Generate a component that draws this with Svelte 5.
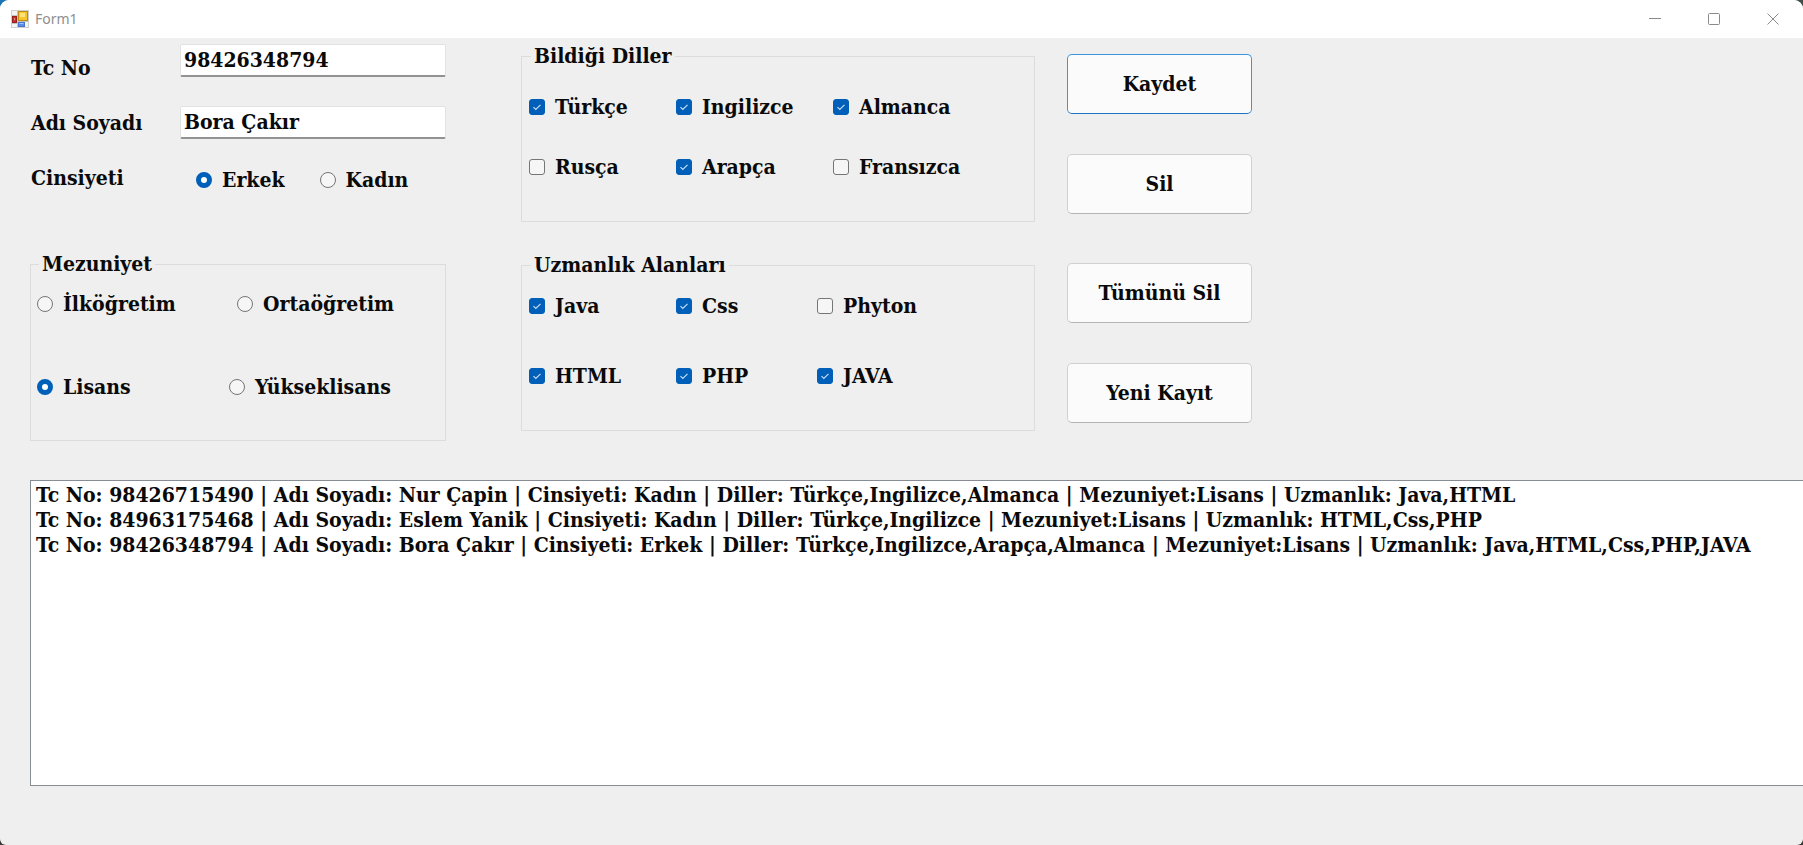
<script>
  const languages = $state([
    { id: 'turkce', name: 'Türkçe', on: true },
    { id: 'ingilizce', name: 'Ingilizce', on: true },
    { id: 'almanca', name: 'Almanca', on: true },
    { id: 'rusca', name: 'Rusça', on: false },
    { id: 'arapca', name: 'Arapça', on: true },
    { id: 'fransizca', name: 'Fransızca', on: false }
  ]);
  const skills = $state([
    { id: 'java', name: 'Java', on: true },
    { id: 'css', name: 'Css', on: true },
    { id: 'phyton', name: 'Phyton', on: false },
    { id: 'html', name: 'HTML', on: true },
    { id: 'php', name: 'PHP', on: true },
    { id: 'java2', name: 'JAVA', on: true }
  ]);
  let tcNo = $state('98426348794');
  let fullName = $state('Bora Çakır');
  let gender = $state('Erkek');
  let degree = $state('Lisans');
  const records = [
    'Tc No: 98426715490 | Adı Soyadı: Nur Çapin | Cinsiyeti: Kadın | Diller: Türkçe,Ingilizce,Almanca | Mezuniyet:Lisans | Uzmanlık: Java,HTML',
    'Tc No: 84963175468 | Adı Soyadı: Eslem Yanik | Cinsiyeti: Kadın | Diller: Türkçe,Ingilizce | Mezuniyet:Lisans | Uzmanlık: HTML,Css,PHP',
    'Tc No: 98426348794 | Adı Soyadı: Bora Çakır | Cinsiyeti: Erkek | Diller: Türkçe,Ingilizce,Arapça,Almanca | Mezuniyet:Lisans | Uzmanlık: Java,HTML,Css,PHP,JAVA'
  ];
</script>

<div class="desktop">
  <div class="window">
    <header class="titlebar">
      <svg class="app-icon" width="18" height="18" viewBox="0 0 18 18" aria-hidden="true">
        <rect x="0.5" y="0.5" width="17" height="17" fill="#f4f4f4" stroke="#cfcfcf" />
        <path d="M6.5 1v16M1 5.5h6M1 13.5h6M13.5 12v5M7 11.5h10" stroke="#c4c4c4" fill="none" />
        <rect x="1.5" y="6.5" width="4" height="6" fill="#c4302b" stroke="#962019" />
        <rect x="3" y="8" width="1" height="2" fill="#ec8e7d" />
        <rect x="7.5" y="1.5" width="9" height="9" fill="#f6c52c" stroke="#bd8c15" />
        <rect x="9" y="3" width="5" height="4" fill="#ffe27e" />
        <rect x="7.5" y="12.5" width="6" height="4" fill="#5a8dea" stroke="#4774cb" />
        <rect x="8.5" y="13" width="4" height="1" fill="#a5c4fa" />
      </svg>
      <span class="title">Form1</span>
      <div class="controls">
        <button type="button" aria-label="Simge durumuna küçült">
          <svg width="12" height="12" viewBox="0 0 12 12"><path d="M0 5.5h12" /></svg>
        </button>
        <button type="button" aria-label="Ekranı kapla">
          <svg width="12" height="12" viewBox="0 0 12 12"><rect x="0.5" y="0.5" width="11" height="11" rx="1" /></svg>
        </button>
        <button type="button" aria-label="Kapat">
          <svg width="12" height="12" viewBox="0 0 12 12"><path d="M0.5 0.5l11 11M11.5 0.5l-11 11" /></svg>
        </button>
      </div>
    </header>

    <main>
      <div class="columns">
        <section class="person">
          <div class="details">
            <div class="labels">
              <label for="tc">Tc No</label>
              <label for="name">Adı Soyadı</label>
              <span id="gender-label">Cinsiyeti</span>
            </div>
            <div class="fields">
              <input id="tc" type="text" bind:value={tcNo} />
              <input id="name" type="text" bind:value={fullName} />
              <div class="genders" role="radiogroup" aria-labelledby="gender-label">
                <label class="choice"><input type="radio" value="Erkek" bind:group={gender} />Erkek</label>
                <label class="choice"><input type="radio" value="Kadın" bind:group={gender} />Kadın</label>
              </div>
            </div>
          </div>
          <fieldset class="degrees">
            <legend>Mezuniyet</legend>
            <div class="degree-row school">
              <label class="choice"><input type="radio" value="İlköğretim" bind:group={degree} />İlköğretim</label>
              <label class="choice"><input type="radio" value="Ortaöğretim" bind:group={degree} />Ortaöğretim</label>
            </div>
            <div class="degree-row university">
              <label class="choice"><input type="radio" value="Lisans" bind:group={degree} />Lisans</label>
              <label class="choice"><input type="radio" value="Yükseklisans" bind:group={degree} />Yükseklisans</label>
            </div>
          </fieldset>
        </section>

        <section class="abilities">
          <fieldset class="checks languages">
            <legend>Bildiği Diller</legend>
            {#each languages as item (item.id)}
              <label class="choice"><input type="checkbox" bind:checked={item.on} />{item.name}</label>
            {/each}
          </fieldset>
          <fieldset class="checks skills">
            <legend>Uzmanlık Alanları</legend>
            {#each skills as item (item.id)}
              <label class="choice"><input type="checkbox" bind:checked={item.on} />{item.name}</label>
            {/each}
          </fieldset>
        </section>

        <section class="actions">
          <div class="pair">
            <button type="button" class="primary">Kaydet</button>
            <button type="button">Sil</button>
          </div>
          <div class="pair">
            <button type="button">Tümünü Sil</button>
            <button type="button">Yeni Kayıt</button>
          </div>
        </section>
      </div>

      <select class="records" size="12" aria-label="Kayıtlar">
        {#each records as line}
          <option>{line}</option>
        {/each}
      </select>
    </main>
  </div>
</div>

<style>
  .desktop {
    min-height: 100vh;
    display: flex;
    background:
      linear-gradient(90deg, #1b75b5 50%, #3f4f49 50%) top / 100% 50% no-repeat,
      #3a3735;
  }
  .window {
    flex: 1;
    min-width: 0;
    display: flex;
    flex-direction: column;
    overflow: hidden;
    border-radius: 9px 9px 6px 6px;
    background: #efefef;
    color: #0a0a0a;
    font: bold 21px/24px 'DejaVu Serif Condensed', 'DejaVu Serif', serif;
  }
  .titlebar {
    display: flex;
    align-items: center;
    height: 38px;
    box-sizing: border-box;
    padding-left: 11px;
    background: #fff;
  }
  .title {
    margin-left: 6px;
    color: #8e8e8e;
    font: 15px/20px 'Noto Sans', 'Open Sans', sans-serif;
    font-size: 14px;
  }
  .controls {
    display: flex;
    margin-left: auto;
    padding-right: 1px;
  }
  .controls button {
    width: 59px;
    height: 38px;
    padding: 0;
    border: 0;
    background: none;
    display: grid;
    place-items: center;
  }
  .controls svg {
    fill: none;
    stroke: #8a8a8a;
  }
  main {
    flex: 1;
    display: flex;
    flex-direction: column;
    padding: 6px 0 59px 30px;
  }
  .columns {
    display: grid;
    grid-template-columns: minmax(0, 459px) minmax(0, 514px) minmax(0, 185px);
    column-gap: 32px;
    align-items: start;
  }
  .details,
  .degrees {
    max-width: 416px;
    box-sizing: border-box;
  }
  .details {
    display: grid;
    grid-template-columns: 150px 1fr;
  }
  .labels {
    display: flex;
    flex-direction: column;
    gap: 31px;
    padding: 12px 0 0 1px;
  }
  .fields {
    display: flex;
    flex-direction: column;
    gap: 29px;
  }
  .fields input[type='text'] {
    width: 100%;
    height: 33px;
    box-sizing: border-box;
    margin: 0;
    padding: 0 3px 1px;
    border: 1px solid #e2e2e2;
    border-bottom: 2px solid #929292;
    border-radius: 2px;
    background: #fff;
    color: inherit;
    font: inherit;
    outline: none;
  }
  .genders {
    display: flex;
    gap: 35px;
    padding-left: 16px;
  }
  .choice {
    display: flex;
    align-items: center;
    gap: 10px;
    white-space: nowrap;
  }
  .choice input {
    appearance: none;
    flex: none;
    width: 16px;
    height: 16px;
    box-sizing: border-box;
    margin: 0;
    border: 1px solid #757575;
    background: #f6f6f6;
  }
  input[type='radio'] {
    border-radius: 50%;
  }
  input[type='radio']:checked {
    border: 5px solid #005fb8;
    background: #fff;
  }
  input[type='checkbox'] {
    border-radius: 3px;
  }
  input[type='checkbox']:checked {
    border-color: #005fb8;
    background: #005fb8 url("data:image/svg+xml,%3Csvg xmlns='http://www.w3.org/2000/svg' viewBox='0 0 14 14'%3E%3Cpath d='M3.5 7.2l2.3 2.3 4.7-4.7' fill='none' stroke='%23c4def4' stroke-width='1.2'/%3E%3C/svg%3E") center / 14px no-repeat;
  }
  fieldset {
    min-width: 0;
    margin: 0;
    border: 1px solid #dcdcdc;
  }
  legend {
    margin-left: 2px;
    padding: 0 3px;
  }
  .degrees {
    height: 189px;
    margin-top: 60px;
    padding: 16px 0 0 6px;
  }
  .degree-row {
    display: grid;
    margin-bottom: 59px;
  }
  .school {
    grid-template-columns: 200px 1fr;
  }
  .university {
    grid-template-columns: 192px 1fr;
  }
  .abilities {
    display: flex;
    flex-direction: column;
    gap: 31px;
  }
  .checks {
    height: 178px;
    box-sizing: border-box;
    display: grid;
    align-content: start;
    padding: 0 0 0 7px;
  }
  .languages {
    grid-template-columns: 147px 157px 1fr;
    padding-top: 27px;
    row-gap: 36px;
  }
  .skills {
    grid-template-columns: 147px 141px 1fr;
    padding-top: 17px;
    row-gap: 46px;
  }
  .actions {
    display: flex;
    flex-direction: column;
    gap: 49px;
    padding-top: 10px;
  }
  .pair {
    display: flex;
    flex-direction: column;
    gap: 40px;
  }
  .pair button {
    height: 60px;
    padding: 0;
    border: 1px solid #d0d0d0;
    border-bottom-color: #b5b5b5;
    border-radius: 5px;
    background: #fbfbfb;
    color: inherit;
    font: inherit;
  }
  .pair .primary {
    border-color: #3c96dc;
    border-bottom-color: #1a76c4;
  }
  .records {
    flex: 1;
    min-height: 300px;
    width: 100%;
    margin: 39px 0 0;
    padding: 1px 0 0 5px;
    box-sizing: border-box;
    overflow: hidden;
    border: 1px solid #888c94;
    border-right: 0;
    border-radius: 0;
    background: #fff;
    color: inherit;
    font: inherit;
    outline: none;
  }
  .records option {
    min-height: 25px;
    padding: 0;
    font-weight: bold;
    line-height: 25px;
    white-space: pre;
  }
</style>
